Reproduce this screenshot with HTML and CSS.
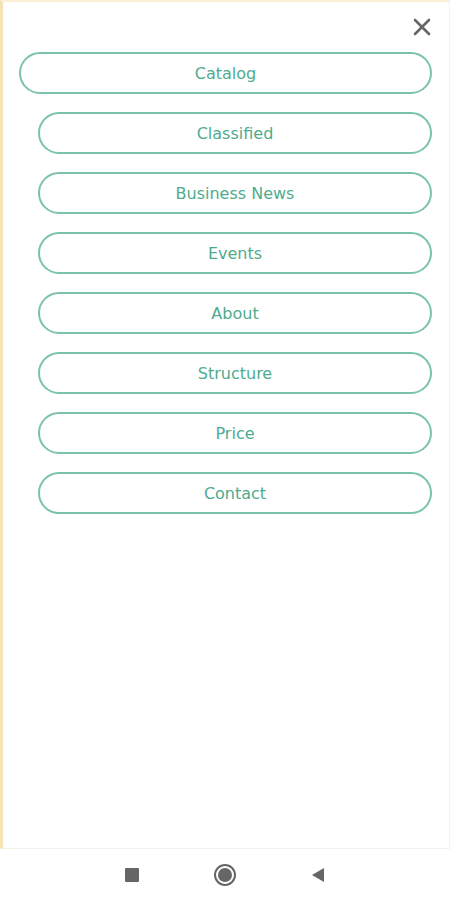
FILE: index.html
```html
<!DOCTYPE html>
<html lang="en">
<head>
    <meta charset="UTF-8">
    <meta name="viewport" content="width=device-width, initial-scale=1.0">
    <title>Menu</title>
    <link rel="stylesheet" href="styles.css">
</head>
<body>
    <div class="panel">
        <div class="close-row">
            <button class="close-btn" aria-label="Close">
                <svg width="18" height="18" viewBox="0 0 18 18">
                    <path d="M2 2 L16 16 M16 2 L2 16" stroke="#666" stroke-width="2.6" stroke-linecap="round"/>
                </svg>
            </button>
        </div>

        <nav class="menu">
            <a href="#" class="menu-item first">Catalog</a>
            <a href="#" class="menu-item">Classified</a>
            <a href="#" class="menu-item">Business News</a>
            <a href="#" class="menu-item">Events</a>
            <a href="#" class="menu-item">About</a>
            <a href="#" class="menu-item">Structure</a>
            <a href="#" class="menu-item">Price</a>
            <a href="#" class="menu-item">Contact</a>
        </nav>
    </div>

    <!-- android navigation bar -->
    <div class="navbar">
        <span class="nav-square"></span>
        <span class="nav-home"></span>
        <svg class="nav-back" width="14" height="16" viewBox="0 0 14 16">
            <path d="M13 1 L1 8 L13 15 Z" fill="#666"/>
        </svg>
    </div>
</body>
</html>
```

FILE: styles.css
```css
body {
    margin: 0;
    padding: 0;
    font-family: "DejaVu Sans", "Noto Sans", sans-serif;
    background-color: #fff;
}

.panel {
    height: 849px;
    box-sizing: border-box;
    border-left: 3px solid #f6e2b4;
    border-top: 2px solid #fbf0d6;
    border-right: 1px solid #fbf4e4;
    border-bottom: 1px solid #f4f1ea;
    background-color: #fff;
}

.close-row {
    display: flex;
    justify-content: flex-end;
    padding: 14px 17px 0 0;
}

.close-btn {
    background: none;
    border: none;
    padding: 0;
    width: 20px;
    height: 22px;
    display: flex;
    align-items: center;
    justify-content: center;
    cursor: pointer;
}

.menu {
    display: flex;
    flex-direction: column;
    gap: 18px;
    padding: 14px 17px 0 35px;
}

.menu-item {
    display: flex;
    align-items: center;
    justify-content: center;
    height: 42px;
    box-sizing: border-box;
    border: 2px solid #7ac3a9;
    border-radius: 21px;
    color: #4fab8e;
    font-size: 16px;
    text-decoration: none;
}

.menu-item.first {
    margin-left: -19px;
}

.navbar {
    height: 51px;
    display: flex;
    align-items: center;
    justify-content: center;
    gap: 77px;
}

.nav-square {
    width: 14px;
    height: 14px;
    background-color: #666;
    border-radius: 1px;
}

.nav-home {
    width: 14px;
    height: 14px;
    border-radius: 50%;
    background-color: #666;
    border: 2px solid #fff;
    box-shadow: 0 0 0 2px #666;
}
```
